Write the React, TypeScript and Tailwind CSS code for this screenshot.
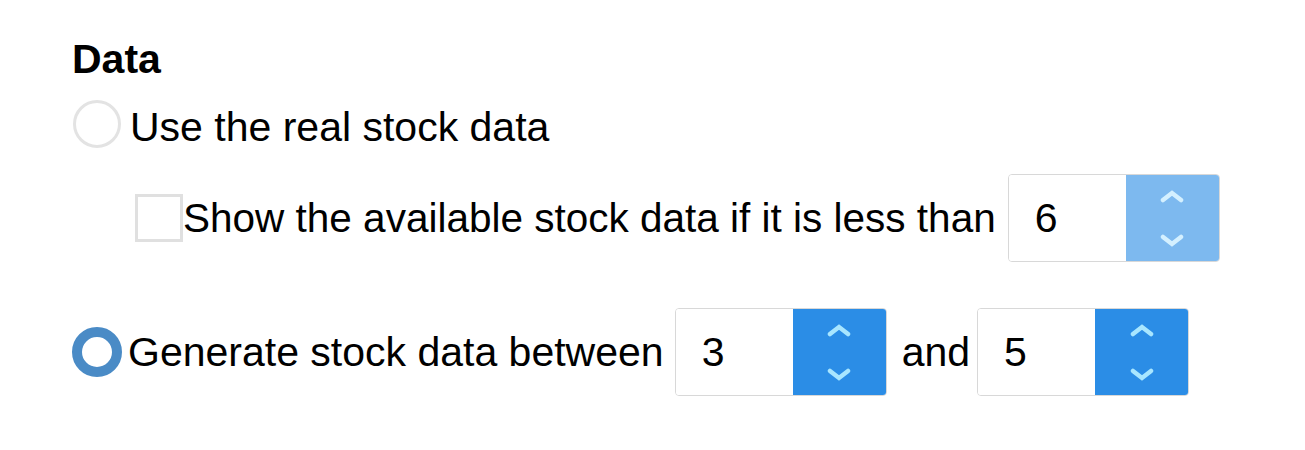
import React from 'react';

function Chevron({ dir, color }: { dir: 'up' | 'down'; color: string }) {
  const points = dir === 'up' ? '3,10 12,3 21,10' : '3,3 12,10 21,3';
  return (
    <svg width="24" height="13" viewBox="0 0 24 13" fill="none">
      <polyline points={points} stroke={color} strokeWidth="4.5" strokeLinecap="round" strokeLinejoin="miter" />
    </svg>
  );
}

interface StepperProps {
  value: number;
  muted?: boolean;
  className?: string;
}

function Stepper({ value, muted, className = '' }: StepperProps) {
  return (
    <div className={`flex h-[88px] w-[212px] rounded-[4px] border border-[#d8d8d8] overflow-hidden ${className}`}>
      <div className="flex flex-1 items-center bg-white pl-[26px] text-[41px] leading-none">{value}</div>
      <button
        type="button"
        className={`flex w-[93px] flex-col items-center justify-center gap-[31px] ${muted ? 'bg-[#7db9ef]' : 'bg-[#2b8de6]'}`}
      >
        <Chevron dir="up" color={muted ? '#d4f0ff' : '#a8e6ff'} />
        <Chevron dir="down" color={muted ? '#d4f0ff' : '#a8e6ff'} />
      </button>
    </div>
  );
}

export default function App() {
  return (
    <div className="h-[450px] w-[1305px] bg-white pl-[72px] pt-[36px] font-['Liberation_Sans',Arial,sans-serif] text-black">
      <h2 className="text-[41px] font-bold leading-[47px]">Data</h2>

      <label className="mt-[17px] flex h-[48px] items-center">
        <span className="ml-[1px] h-[48px] w-[48px] rounded-full border-[3px] border-[#e3e3e3] bg-white" />
        <span className="ml-[9px] mt-[7px] text-[41px] leading-[47px]">Use the real stock data</span>
      </label>

      <div className="mt-[26px] flex items-center">
        <span className="ml-[63px] h-[48px] w-[48px] border-[3px] border-[#e0e0e0] bg-white" />
        <span className="text-[40.5px] leading-[47px]">Show the available stock data if it is less than</span>
        <Stepper value={6} muted className="ml-[12px]" />
      </div>

      <div className="mt-[46px] flex items-center">
        <span className="h-[50px] w-[50px] rounded-full border-[10px] border-[#4a8bc6] bg-white" />
        <span className="ml-[6px] text-[41px] leading-[47px]">Generate stock data between</span>
        <Stepper value={3} className="ml-[11px]" />
        <span className="ml-[15px] text-[41px] leading-[47px]">and</span>
        <Stepper value={5} className="ml-[7px]" />
      </div>
    </div>
  );
}
